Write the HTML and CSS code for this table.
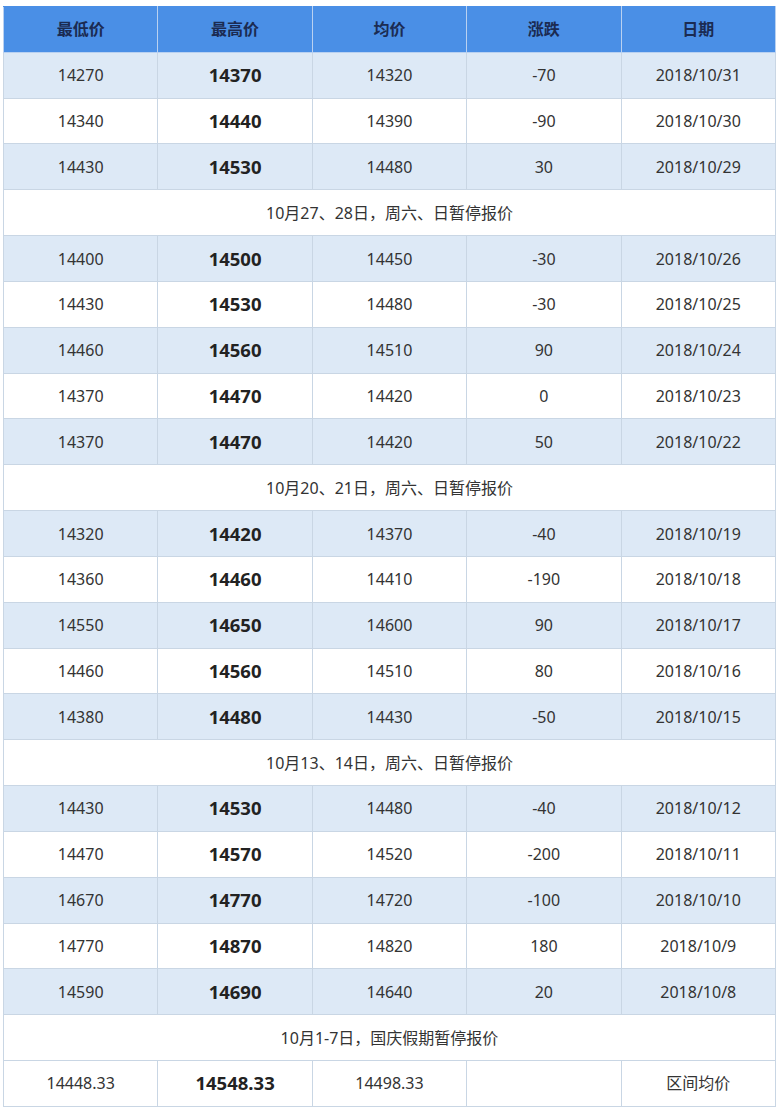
FILE: index.html
```html
<!DOCTYPE html>
<html lang="zh-CN">
<head>
<meta charset="utf-8">
<title>价格表</title>
<link rel="stylesheet" href="styles.css">
</head>
<body>
<table class="price-table">
  <thead>
    <tr><th>最低价</th><th>最高价</th><th>均价</th><th>涨跌</th><th>日期</th></tr>
  </thead>
  <tbody>
    <tr class="alt"><td>14270</td><td class="hi">14370</td><td>14320</td><td>-70</td><td>2018/10/31</td></tr>
    <tr><td>14340</td><td class="hi">14440</td><td>14390</td><td>-90</td><td>2018/10/30</td></tr>
    <tr class="alt"><td>14430</td><td class="hi">14530</td><td>14480</td><td>30</td><td>2018/10/29</td></tr>
    <tr><td colspan="5">10月27、28日，周六、日暂停报价</td></tr>
    <tr class="alt"><td>14400</td><td class="hi">14500</td><td>14450</td><td>-30</td><td>2018/10/26</td></tr>
    <tr><td>14430</td><td class="hi">14530</td><td>14480</td><td>-30</td><td>2018/10/25</td></tr>
    <tr class="alt"><td>14460</td><td class="hi">14560</td><td>14510</td><td>90</td><td>2018/10/24</td></tr>
    <tr><td>14370</td><td class="hi">14470</td><td>14420</td><td>0</td><td>2018/10/23</td></tr>
    <tr class="alt"><td>14370</td><td class="hi">14470</td><td>14420</td><td>50</td><td>2018/10/22</td></tr>
    <tr><td colspan="5">10月20、21日，周六、日暂停报价</td></tr>
    <tr class="alt"><td>14320</td><td class="hi">14420</td><td>14370</td><td>-40</td><td>2018/10/19</td></tr>
    <tr><td>14360</td><td class="hi">14460</td><td>14410</td><td>-190</td><td>2018/10/18</td></tr>
    <tr class="alt"><td>14550</td><td class="hi">14650</td><td>14600</td><td>90</td><td>2018/10/17</td></tr>
    <tr><td>14460</td><td class="hi">14560</td><td>14510</td><td>80</td><td>2018/10/16</td></tr>
    <tr class="alt"><td>14380</td><td class="hi">14480</td><td>14430</td><td>-50</td><td>2018/10/15</td></tr>
    <tr><td colspan="5">10月13、14日，周六、日暂停报价</td></tr>
    <tr class="alt"><td>14430</td><td class="hi">14530</td><td>14480</td><td>-40</td><td>2018/10/12</td></tr>
    <tr><td>14470</td><td class="hi">14570</td><td>14520</td><td>-200</td><td>2018/10/11</td></tr>
    <tr class="alt"><td>14670</td><td class="hi">14770</td><td>14720</td><td>-100</td><td>2018/10/10</td></tr>
    <tr><td>14770</td><td class="hi">14870</td><td>14820</td><td>180</td><td>2018/10/9</td></tr>
    <tr class="alt"><td>14590</td><td class="hi">14690</td><td>14640</td><td>20</td><td>2018/10/8</td></tr>
    <tr><td colspan="5">10月1-7日，国庆假期暂停报价</td></tr>
    <tr><td>14448.33</td><td class="hi">14548.33</td><td>14498.33</td><td></td><td>区间均价</td></tr>
  </tbody>
</table>
</body>
</html>
```
FILE: styles.css
```css
html, body {
  margin: 0;
  padding: 0;
  background: #ffffff;
}

body {
  padding: 6px 0 0 3px;
  font-family: "Noto Sans", "Noto Sans CJK SC", sans-serif;
  color: #333333;
}

.price-table {
  width: 773px;
  border-collapse: collapse;
  table-layout: fixed;
}

.price-table tr {
  height: 45.83px;
}

.price-table th,
.price-table td {
  border: 1px solid #c9d6e4;
  text-align: center;
  vertical-align: middle;
  padding: 0;
  font-size: 16px;
  line-height: 20px;
}

.price-table th {
  background: #4a8fe6;
  color: #1b2b52;
  font-weight: bold;
  border-color: #b9d1f1;
  border-top-color: #4a8fe6;
}

.price-table tbody tr {
  background: #ffffff;
}

.price-table tbody tr.alt {
  background: #dde9f6;
}

.price-table td.hi {
  font-weight: bold;
  font-size: 18.5px;
  color: #222222;
}
```
